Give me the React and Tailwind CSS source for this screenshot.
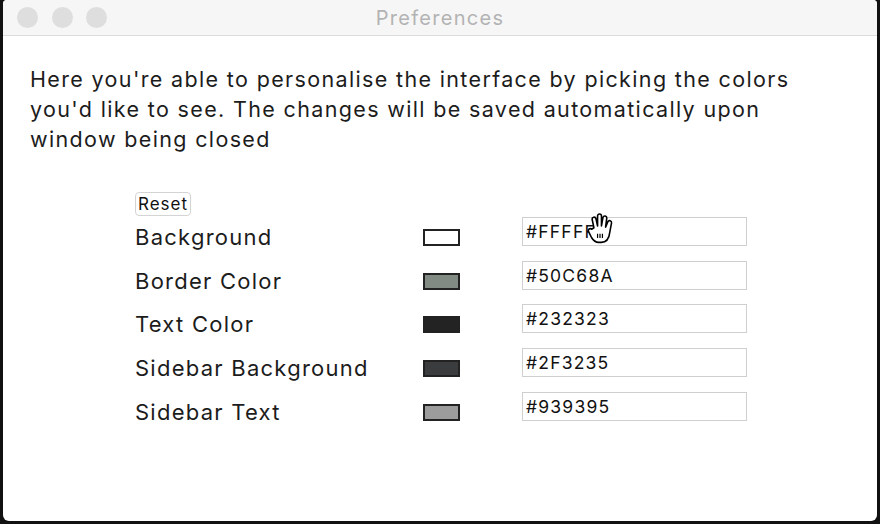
import { useState } from 'react';

const rows = [
  { label: 'Background', swatch: 'bg-white', value: '#FFFFFF' },
  { label: 'Border Color', swatch: 'bg-[#828a84]', value: '#50C68A' },
  { label: 'Text Color', swatch: 'bg-[#232323]', value: '#232323' },
  { label: 'Sidebar Background', swatch: 'bg-[#3a3c3d]', value: '#2F3235' },
  { label: 'Sidebar Text', swatch: 'bg-[#9c9c9c]', value: '#939395' },
];

function HandCursor() {
  return (
    <svg width="32" height="34" viewBox="0 0 24 28" className="absolute left-[62px] top-[-5px]">
      <path
        d="M7 13 L5.5 6 a1.6 1.6 0 0 1 3.1 -0.7 L10 11.5 V3.2 a1.6 1.6 0 0 1 3.2 0 V11.5 L14.5 4.3 a1.6 1.6 0 0 1 3.1 0.6 L16.6 12.5 L18.5 8 a1.6 1.6 0 0 1 3 1 L20 17 c-0.5 5 -3 8 -7 8 h-2 c-3 0 -4.5 -1.5 -6 -4 L2.5 16 a1.6 1.6 0 0 1 2.6 -1.8 Z"
        fill="white"
        stroke="black"
        strokeWidth="1.3"
        strokeLinejoin="round"
      />
      <path d="M10 18 v3.5 M12 18 v3.5 M14 18 v3.5" stroke="black" strokeWidth="1" />
    </svg>
  );
}

export default function App() {
  const [values, setValues] = useState(rows.map((r) => r.value));

  return (
    <div className="w-[880px] h-[524px] bg-[#111] px-[3px] pb-[3px] font-['Inter',sans-serif]">
      <div className="h-full bg-white rounded-b-[6px] rounded-t-[4px] flex flex-col overflow-hidden">
        {/* title bar */}
        <div className="h-[36px] shrink-0 bg-[#f6f6f6] border-b border-[#dcdcdc] relative flex items-center justify-center">
          <div className="absolute left-[14px] top-[7px] flex gap-[13.5px]">
            <span className="w-[21px] h-[21px] rounded-full bg-[#dedede]" />
            <span className="w-[21px] h-[21px] rounded-full bg-[#dedede]" />
            <span className="w-[21px] h-[21px] rounded-full bg-[#dedede]" />
          </div>
          <span className="text-[20px] text-[#b3b3b3] tracking-[1.3px]">Preferences</span>
        </div>

        {/* body */}
        <div className="px-[27px] pt-[28px]">
          <p className="w-[785px] text-[21.5px] leading-[30px] text-[#1c1c1c] tracking-[1.35px]">
            Here you're able to personalise the interface by picking the colors you'd like to see. The changes will be saved automatically upon window being closed
          </p>

          <div className="ml-[105px] mt-[38px]">
            <button className="text-[17px] leading-[20px] px-[2px] py-[1px] border border-[#d4d4d4] rounded-[4px] text-[#111] bg-white tracking-[1px]">
              Reset
            </button>
            <div className="flex flex-col">
              {rows.map((r, i) => (
                <div key={r.label} className="flex items-center h-[43.6px]">
                  <span className="w-[288px] text-[22px] text-[#1c1c1c] tracking-[1.25px]">{r.label}</span>
                  <span className={`w-[37px] h-[17px] border-2 border-[#222] ${r.swatch}`} />
                  <div className="relative ml-[62px] mb-[12px]">
                    <input
                      value={values[i]}
                      onChange={(e) => setValues(values.map((v, j) => (j === i ? e.target.value : v)))}
                      className="w-[225px] h-[29px] border border-[#cfcfcf] px-[3px] text-[17.5px] text-[#111] outline-none tracking-[1.2px]"
                    />
                    {i === 0 && <HandCursor />}
                  </div>
                </div>
              ))}
            </div>
          </div>
        </div>
      </div>
    </div>
  );
}
